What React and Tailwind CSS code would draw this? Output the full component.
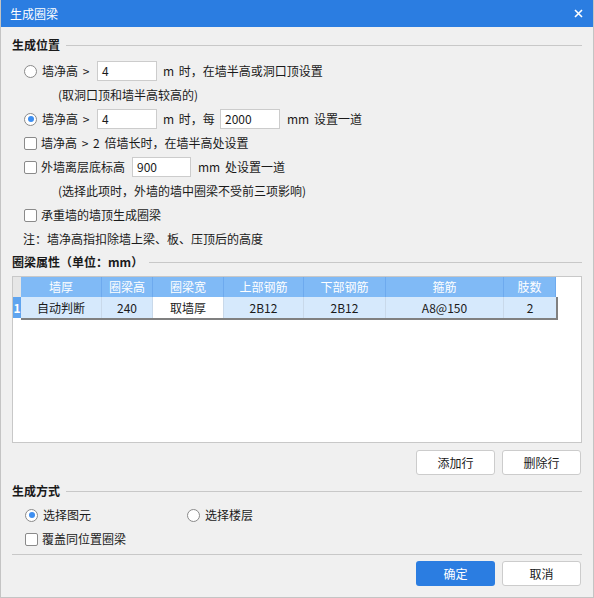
import React from "react";

const font = { fontFamily: '"Noto Sans CJK SC", "Noto Sans", sans-serif' };

const Radio = ({ checked }) => (
  <span className="flex h-[13px] w-[13px] shrink-0 items-center justify-center rounded-full border border-[#8a8a8a] bg-white">
    {checked && <span className="h-[6px] w-[6px] rounded-full bg-[#3d8ef0]" />}
  </span>
);

const Check = () => (
  <span className="h-[13px] w-[13px] shrink-0 rounded-[2px] border border-[#8a8a8a] bg-white" />
);

const Input = ({ value, w = "w-[60px]" }) => (
  <div className={`flex h-[20px] ${w} items-center border border-[#cccccc] bg-white pl-[4px] text-[12px] text-[#1a1a1a]`}>
    {value}
  </div>
);

const SectionTitle = ({ title, lineGap = "ml-[6px]" }) => (
  <div className="flex h-[20px] items-center">
    <span className="text-[12px] font-bold text-[#1a1a1a]">{title}</span>
    <div className={`h-px flex-1 bg-[#c8c8c8] ${lineGap}`} />
  </div>
);

const Button = ({ children, primary }) => (
  <button
    className={`flex h-[25px] w-[79px] items-center justify-center rounded-[3px] text-[12px] ${
      primary
        ? "bg-[#2b7de1] text-white"
        : "border border-[#cccccc] bg-white text-[#1a1a1a]"
    }`}
  >
    {children}
  </button>
);

const columns = [
  { title: "墙厚", w: "w-[81px]", value: "自动判断" },
  { title: "圈梁高", w: "w-[51px]", value: "240" },
  { title: "圈梁宽", w: "w-[71px]", value: "取墙厚", white: true },
  { title: "上部钢筋", w: "w-[80px]", value: "2B12" },
  { title: "下部钢筋", w: "w-[82px]", value: "2B12" },
  { title: "箍筋", w: "w-[118px]", value: "A8@150" },
  { title: "肢数", w: "w-[52px]", value: "2" },
];

const App = () => {
  return (
    <div
      style={font}
      className="flex h-[598px] w-[594px] flex-col border-x border-b border-[#c4c4c4] bg-[#f0f0f0] text-[12px] text-[#1a1a1a]"
    >
      {/* title bar */}
      <div className="flex h-[27px] shrink-0 items-center justify-between bg-[#2b7de1] pl-[9px] pr-[9px] text-white">
        <span className="text-[12px]">生成圈梁</span>
        <svg width="9" height="9" viewBox="0 0 9 9" className="mr-[1px]">
          <path d="M1 1 L8 8 M8 1 L1 8" stroke="white" strokeWidth="1.6" />
        </svg>
      </div>

      <div className="flex flex-1 flex-col px-[11px]">
        {/* 生成位置 */}
        <div className="mt-[8px]">
          <SectionTitle title="生成位置" />
        </div>
        <div className="mt-[4px] flex flex-col pl-[12px] [word-spacing:2px]">
          <div className="flex h-[24px] items-center">
            <Radio />
            <span className="ml-[5px] w-[55px]">墙净高 &gt;</span>
            <Input value="4" />
            <span className="ml-[6px]">m 时，在墙半高或洞口顶设置</span>
          </div>
          <div className="flex h-[24px] items-center pl-[34px]">
            (取洞口顶和墙半高较高的)
          </div>
          <div className="flex h-[24px] items-center">
            <Radio checked />
            <span className="ml-[5px] w-[55px]">墙净高 &gt;</span>
            <Input value="4" />
            <span className="ml-[6px] w-[57px]">m 时，每</span>
            <Input value="2000" />
            <span className="ml-[7px]">mm 设置一道</span>
          </div>
          <div className="flex h-[24px] items-center">
            <Check />
            <span className="ml-[4px]">墙净高 &gt; 2 倍墙长时，在墙半高处设置</span>
          </div>
          <div className="flex h-[24px] items-center">
            <Check />
            <span className="ml-[4px] w-[91px]">外墙离层底标高</span>
            <Input value="900" w="w-[59px]" />
            <span className="ml-[7px]">mm 处设置一道</span>
          </div>
          <div className="flex h-[24px] items-center pl-[34px]">
            (选择此项时，外墙的墙中圈梁不受前三项影响)
          </div>
          <div className="flex h-[24px] items-center">
            <Check />
            <span className="ml-[4px]">承重墙的墙顶生成圈梁</span>
          </div>
          <div className="-ml-[1px] flex h-[24px] items-center">
            注：墙净高指扣除墙上梁、板、压顶后的高度
          </div>
        </div>

        {/* 圈梁属性 */}
        <div className="mt-[1px]">
          <SectionTitle title="圈梁属性（单位：mm）" />
        </div>
        <div className="mt-[4px] h-[167px] border border-[#c8c8c8] bg-white">
          <div className="flex h-[20px]">
            <div className="w-[8px] bg-[#e6e6e6]" />
            {columns.map((c) => (
              <div
                key={c.title}
                className={`${c.w} flex items-center justify-center border-r border-[#6eaaee] bg-[#80baf6] text-white`}
              >
                {c.title}
              </div>
            ))}
          </div>
          <div className="flex">
            <div className="flex h-[21px] w-[8px] items-center justify-center bg-[#5fa4ef] text-[12px] font-bold text-white">
              1
            </div>
            <div className="flex h-[23px] border-r-2 border-b-2 border-[#808080]">
              {columns.map((c) => (
                <div
                  key={c.title}
                  className={`${c.w} flex h-[21px] items-center justify-center border-r border-[#c9d9ea] ${
                    c.white ? "bg-white" : "bg-[#d6e9fc]"
                  } text-[#1a1a1a] last:border-r-0`}
                >
                  {c.value}
                </div>
              ))}
            </div>
          </div>
        </div>
        <div className="mt-[7px] flex justify-end gap-[7px] pr-[1px]">
          <Button>添加行</Button>
          <Button>删除行</Button>
        </div>

        {/* 生成方式 */}
        <div className="mt-[6px]">
          <SectionTitle title="生成方式" />
        </div>
        <div className="flex flex-col pl-[13px]">
          <div className="mt-[2px] flex h-[24px] items-center">
            <div className="flex w-[162px] items-center">
              <Radio checked />
              <span className="ml-[5px]">选择图元</span>
            </div>
            <Radio />
            <span className="ml-[5px]">选择楼层</span>
          </div>
          <div className="flex h-[24px] items-center">
            <Check />
            <span className="ml-[4px]">覆盖同位置圈梁</span>
          </div>
        </div>
        <div className="mt-[3px] h-px bg-[#c8c8c8]" />
        <div className="mt-[6px] flex justify-end gap-[7px] pr-[1px]">
          <Button primary>确定</Button>
          <Button>取消</Button>
        </div>
      </div>
    </div>
  );
};

export default App;
